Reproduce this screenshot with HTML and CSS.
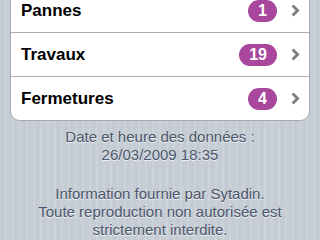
FILE: index.html
```html
<!DOCTYPE html>
<html lang="fr">
<head>
<meta charset="utf-8">
<link rel="stylesheet" href="styles.css">
</head>
<body>
<div class="screen">
  <ul class="group">
    <li class="row"><span class="label">Pannes</span><span class="badge">1</span><svg class="chev" width="9" height="13" viewBox="0 0 9 13"><polyline points="1.6,1.6 6.6,6.5 1.6,11.4" fill="none" stroke="#7d7d7d" stroke-width="2.8"/></svg></li>
    <li class="row"><span class="label">Travaux</span><span class="badge">19</span><svg class="chev" width="9" height="13" viewBox="0 0 9 13"><polyline points="1.6,1.6 6.6,6.5 1.6,11.4" fill="none" stroke="#7d7d7d" stroke-width="2.8"/></svg></li>
    <li class="row"><span class="label">Fermetures</span><span class="badge">4</span><svg class="chev" width="9" height="13" viewBox="0 0 9 13"><polyline points="1.6,1.6 6.6,6.5 1.6,11.4" fill="none" stroke="#7d7d7d" stroke-width="2.8"/></svg></li>
  </ul>
  <div class="footer">
    <p>Date et heure des données :<br>26/03/2009 18:35</p>
    <p>Information fournie par Sytadin.<br>Toute reproduction non autorisée est<br>strictement interdite.</p>
  </div>
</div>
</body>
</html>
```

FILE: styles.css
```css
html, body {
  margin: 0;
  padding: 0;
}
body {
  width: 320px;
  height: 240px;
  overflow: hidden;
  background: repeating-linear-gradient(90deg, #c5ccd4 0, #c5ccd4 5px, #cbd2d8 5px, #cbd2d8 7px);
  font-family: "Liberation Sans", Arial, Helvetica, sans-serif;
}
.screen {
  display: flex;
  flex-direction: column;
}
.group {
  list-style: none;
  margin: -12px 10px 0 10px;
  padding: 0;
  background: #fff;
  border: 1px solid #a7a9ac;
  border-radius: 10px;
}
.row {
  height: 43px;
  display: flex;
  align-items: center;
  padding: 0 9px 0 10px;
  border-bottom: 1px solid #adadad;
}
.row:last-child {
  border-bottom: none;
}
.label {
  flex: 1;
  font-weight: bold;
  font-size: 17px;
  color: #000;
}
.badge {
  height: 22px;
  line-height: 22px;
  padding: 0 10px;
  border-radius: 11px;
  background: #a8479c;
  color: #fff;
  font-weight: bold;
  font-size: 16px;
  margin-right: 14px;
}
.chev {
  display: block;
}
.footer {
  margin-top: 7px;
  text-align: center;
  color: #4c566c;
  font-size: 15px;
  line-height: 18px;
  text-shadow: 0 1px 0 rgba(255,255,255,0.7);
}
.footer p {
  margin: 0 0 21px 0;
}
.footer p:last-child {
  margin-bottom: 0;
}
```
